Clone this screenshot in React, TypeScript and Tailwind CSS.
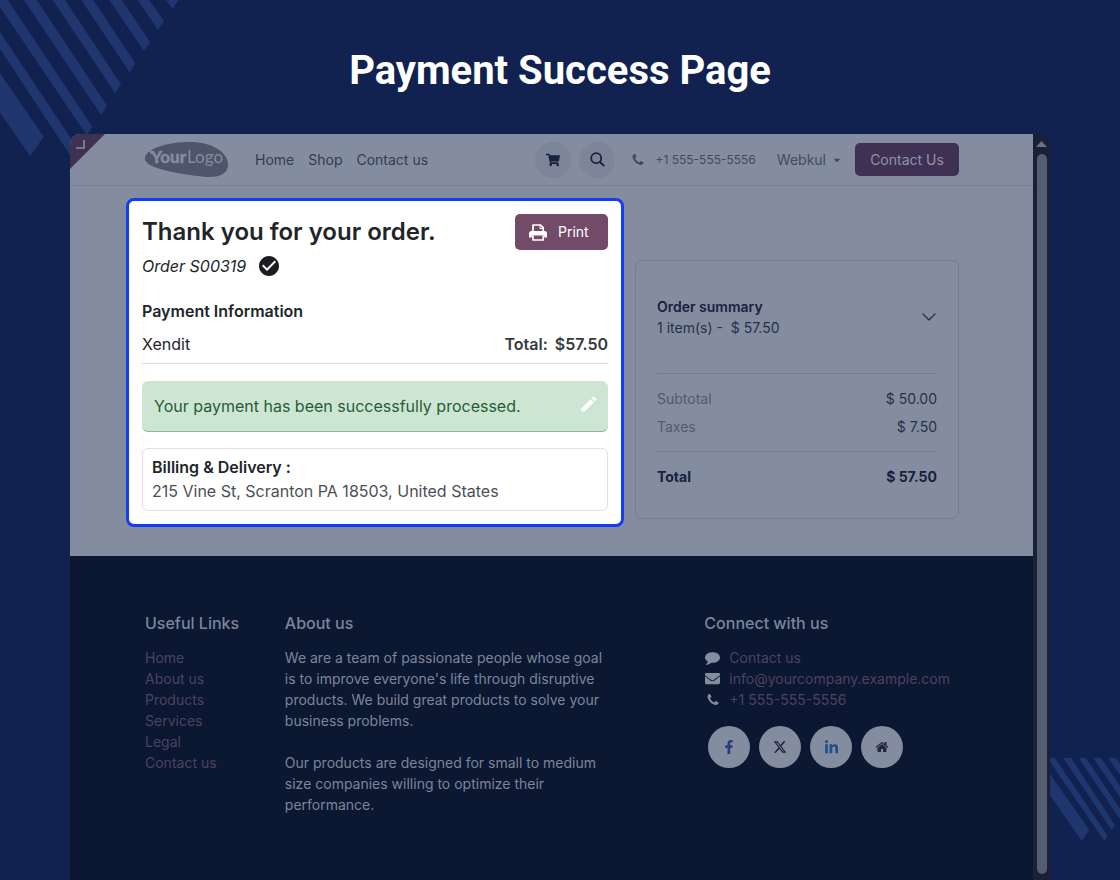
import type { ReactNode } from "react";
import { FaShoppingCart, FaEnvelope, FaFacebookF, FaLinkedinIn, FaCaretDown } from "react-icons/fa";
import { FaXTwitter } from "react-icons/fa6";
import { BsChevronDown } from "react-icons/bs";
import { MdEdit, MdCheckCircle } from "react-icons/md";

function TopStripes() {
  return (
    <svg className="absolute left-0 top-0" width="180" height="158" viewBox="0 0 180 158" fill="#20366f" aria-hidden="true">
      <path d="M166 0H178.3L172.7 9Z" />
      <path d="M137.7 0H149.3L164 21L158 30Z" />
      <path d="M109.3 0H121.7L150 42L144 51Z" />
      <path d="M81.3 0H93.3L135.3 63.3L129.7 72.3Z" />
      <path d="M52.7 0H65L121 84.3L115.3 93.3Z" />
      <path d="M24 0H36.7L107 105.7L101 114.7Z" />
      <path d="M0 0H7.7L92.3 126.7L86.7 135.3L0 7Z" />
      <path d="M0 32L78 149L72 158L0 49Z" />
      <path d="M0 73.3L43.7 136.7L30.3 156.3L0 112.7Z" />
    </svg>
  );
}

function BottomStripes() {
  return (
    <svg className="absolute bottom-[38px] right-0" width="70" height="84" viewBox="0 0 70 84" fill="#20366f" aria-hidden="true">
      <path d="M0 16L39.3 72L31.7 82.7L0 37Z" />
      <path d="M0 0H5L57.7 78L54.3 82.7L0 4Z" />
      <path d="M13.3 0H21L65 67.3L61.7 72Z" />
      <path d="M28.7 0H36L70 51V61.3Z" />
      <path d="M43.3 0H51L70 28V39Z" />
      <path d="M58.3 0H66L70 6V17Z" />
    </svg>
  );
}

function Logo() {
  return (
    <svg width="84" height="36" viewBox="1 1 84 36" role="img" aria-label="Your Logo">
      <path d="M1 16C4 7 24 1 46 1C68 1 84 11 84 24C84 32 76 36.500 64 36C42 34 -3 28 1 16Z" fill="#4d566a" />
      <path d="M5 10L9 10L11 14L7 13Z" fill="#848c9f" />
      <text x="7" y="22" fontFamily="Lato, sans-serif" fontWeight="900" fontSize="17" fill="#848c9f" stroke="#848c9f" strokeWidth="0.4">Your</text>
      <text x="43" y="22" fontFamily="Lato, sans-serif" fontWeight="400" fontSize="17" fill="#848c9f">Logo</text>
    </svg>
  );
}

function SearchIcon() {
  return (
    <svg width="15" height="15" viewBox="0 0 15 15" fill="none" stroke="#18213d" strokeWidth="1.8" strokeLinecap="round" aria-hidden="true">
      <circle cx="6.200" cy="6.200" r="5" />
      <path d="M10 10L13.700 13.700" />
    </svg>
  );
}

function PhoneIcon() {
  return (
    <svg width="14" height="14" viewBox="0 0 1792 1792" fill="currentColor" aria-hidden="true">
      <path d="M1600 1240q0 27-10 70.500t-21 68.500q-21 50-122 106-94 51-186 51-27 0-53-3.500t-57.500-12.500-47-14.500-55.500-20.500-49-18q-98-35-175-83-127-79-264-216t-216-264q-48-77-83-175-3-9-18-49t-20.500-55.500-14.500-47-12.500-57.500-3.500-53q0-92 51-186 56-101 106-122 25-11 68.500-21t70.500-10q14 0 21 3 18 6 53 76 11 19 30 54t35 63.500 31 53.500q3 4 17.500 25t21.500 35.500 7 28.500q0 20-28.500 50t-62 55-62 53-28.500 46q0 9 5 22.500t8.500 20.500 14 24 11.500 19q76 137 174 235t235 174q2 1 19 11.500t24 14 20.500 8.500 22.500 5q18 0 46-28.500t53-62 55-62 50-28.500q14 0 28.500 7t35.500 21.500 25 17.500q25 15 53.500 31t63.500 35 54 30q70 35 76 53 3 7 3 21z" />
    </svg>
  );
}

function HomeIcon() {
  return (
    <svg width="14" height="14" viewBox="0 0 1792 1792" fill="currentColor" aria-hidden="true">
      <path d="M1472 992v480q0 26-19 45t-45 19h-384v-384h-256v384h-384q-26 0-45-19t-19-45v-480q0-1 .5-3t.5-3l575-474 575 474q1 2 1 6zm223-69l-62 74q-8 9-21 11h-3q-13 0-21-7l-692-577-692 577q-12 8-24 7-13-2-21-11l-62-74q-8-10-7-23.500t11-21.500l719-599q32-26 76-26t76 26l244 204v-195q0-14 9-23t23-9h192q14 0 23 9t9 23v408l219 182q10 8 11 21.500t-7 23.500z" />
    </svg>
  );
}

function CommentIcon() {
  return (
    <svg width="15" height="15" viewBox="0 0 1792 1792" fill="currentColor" aria-hidden="true">
      <path d="M1792 896q0 174-120 321.500t-326 233-450 85.500q-70 0-145-8-198 175-460 242-49 14-114 22-17 2-30.500-9t-17.500-29v-1q-3-4-.5-12t2-10 4.500-9.500l6-9 7-8.500 8-9q7-8 31-34.500t34.500-38 31-39.500 32.500-51 27-59 26-76q-157-89-247.500-220t-90.500-281q0-130 71-248.500t191-204.500 286-136.500 348-50.500 348 50.500 286 136.500 191 204.500 71 248.500z" />
    </svg>
  );
}

function PrintIcon() {
  return (
    <svg width="18" height="17" viewBox="0 0 18 17" aria-hidden="true">
      <path d="M4 8V1H11.500L14.200 3.700V8" fill="none" stroke="#fff" strokeWidth="1.700" strokeLinejoin="round" />
      <path d="M11 0.500V4.500H15" fill="none" stroke="#fff" strokeWidth="1" />
      <path d="M2.500 7H15.500Q18 7 18 9.500V13.500H15.200V11.500H2.800V13.500H0V9.500Q0 7 2.500 7Z" fill="#fff" />
      <path d="M4 11.500V16H14.200V11.500" fill="none" stroke="#fff" strokeWidth="1.700" strokeLinejoin="round" />
    </svg>
  );
}

function Header() {
  return (
    <header className="flex h-[52px] items-center border-b border-[#788095] pl-[75px] pr-[74px] text-sm text-[#343c54]">
      <a href="#" className="block shrink-0"><Logo /></a>
      <nav className="ml-[26px] flex gap-[14px]">
        <a href="#">Home</a>
        <a href="#">Shop</a>
        <a href="#">Contact us</a>
      </nav>
      <div className="ml-auto flex items-center">
        <button aria-label="Cart" className="flex size-9 items-center justify-center rounded-full bg-[#7d8599] text-[#18213d]"><FaShoppingCart size={14} /></button>
        <button aria-label="Search" className="ml-2 flex size-9 items-center justify-center rounded-full bg-[#7d8599]"><SearchIcon /></button>
        <a href="#" className="ml-4 flex items-center gap-[10px] text-xs text-[#434a60]"><PhoneIcon />+1 555-555-5556</a>
        <button className="ml-[21px] flex items-center gap-[6px] text-[#434a60]">Webkul <FaCaretDown size={10} /></button>
        <button className="ml-[13px] h-[33px] w-[104px] rounded-[5px] bg-[#3e3153] text-[#8f94a8]">Contact Us</button>
      </div>
    </header>
  );
}

function OrderCard() {
  return (
    <section className="rounded-lg border-[3px] border-[#143cf5] bg-white px-[13px] pb-[13px] pt-[13px] text-base text-[#212529]">
      <div className="flex items-start justify-between">
        <h2 className="text-2xl leading-9 font-semibold">Thank you for your order.</h2>
        <button className="flex h-9 w-[93px] items-center gap-[11px] rounded-[5px] bg-[#714b67] pl-[14px] text-sm text-white"><PrintIcon />Print</button>
      </div>
      <p className="mt-1 flex h-6 items-center gap-[11px] italic">Order S00319 <MdCheckCircle size={24} color="#1c1b1f" /></p>
      <h3 className="mt-[21px] leading-6 font-semibold">Payment Information</h3>
      <div className="mt-[9px] flex justify-between border-b border-[#dcdcdc] pb-[7px] leading-6">
        <span>Xendit</span>
        <span className="flex gap-[7px] font-semibold text-[#343a40]"><span>Total:</span><span>$57.50</span></span>
      </div>
      <div className="mt-[17px] flex h-[51px] items-center justify-between rounded-md border-b border-[#8bb697] bg-[#cde6d4] px-3 text-[#285c36]">
        <span>Your payment has been successfully processed.</span>
        <button aria-label="Edit" className="mb-1 -mr-[3px]"><MdEdit size={20} color="#fff" /></button>
      </div>
      <div className="mt-4 rounded-md border border-[#dee0e2] px-[9px] py-[6px]">
        <h3 className="leading-6 font-semibold">Billing &amp; Delivery :</h3>
        <p className="leading-[25px] text-[#4c5054]">215 Vine St, Scranton PA 18503, United States</p>
      </div>
    </section>
  );
}

function OrderSummary() {
  return (
    <section className="mt-[62px] self-start rounded-md border border-[#757d92] px-[21px] pb-[30px] pt-[35px] text-sm text-[#283049]">
      <div className="flex items-center justify-between pb-[35px]">
        <div className="leading-[21px]">
          <h3 className="font-semibold text-[#18213d]">Order summary</h3>
          <p className="whitespace-pre">1 item(s) -  $ 57.50</p>
        </div>
        <button aria-label="Toggle summary"><BsChevronDown size={16} strokeWidth={0.5} /></button>
      </div>
      <table className="w-full border-t border-[#737b90]">
        <tbody>
          <tr className="h-[39px]"><th scope="row" className="pt-[11px] text-left font-normal text-[#535a70]">Subtotal</th><td className="pt-[11px] text-right">$ 50.00</td></tr>
          <tr className="h-[39px]"><th scope="row" className="pb-[10px] text-left font-normal text-[#535a70]">Taxes</th><td className="pb-[10px] text-right">$ 7.50</td></tr>
          <tr className="h-[36px] border-t border-[#737b90] font-bold text-[#18213d]"><th scope="row" className="pt-[14px] text-left">Total</th><td className="pt-[14px] text-right">$ 57.50</td></tr>
        </tbody>
      </table>
    </section>
  );
}

function ContactRow({ icon, children }: { icon: ReactNode; children: ReactNode }) {
  return (
    <li className="flex items-center gap-2">
      <span className="flex w-[17px] justify-center text-[#848c9f]">{icon}</span>
      <a href="#">{children}</a>
    </li>
  );
}

function Social({ label, color, children }: { label: string; color: string; children: ReactNode }) {
  return (
    <a href="#" aria-label={label} style={{ color }} className="flex size-[42px] items-center justify-center rounded-full bg-[#848c9f]">
      {children}
    </a>
  );
}

function Footer() {
  return (
    <footer className="grid flex-1 grid-cols-[140fr_420fr_329fr] items-start bg-[#0c1732] pl-[75px] pt-[55px] text-sm leading-[21px] text-[#7d8599]">
      <div>
        <h4 className="mb-3 text-base leading-6 font-medium">Useful Links</h4>
        <ul className="text-[#4b4361]">
          {["Home", "About us", "Products", "Services", "Legal", "Contact us"].map((t) => (
            <li key={t}><a href="#">{t}</a></li>
          ))}
        </ul>
      </div>
      <div>
        <h4 className="mb-3 text-base leading-6 font-medium">About us</h4>
        <p className="mb-[21px] max-w-[330px]">We are a team of passionate people whose goal is to improve everyone's life through disruptive products. We build great products to solve your business problems.</p>
        <p className="max-w-[330px]">Our products are designed for small to medium size companies willing to optimize their performance.</p>
      </div>
      <div>
        <h4 className="mb-3 text-base leading-6 font-medium">Connect with us</h4>
        <ul className="text-[#4b4361]">
          <ContactRow icon={<CommentIcon />}>Contact us</ContactRow>
          <ContactRow icon={<FaEnvelope size={15} />}>info@yourcompany.example.com</ContactRow>
          <ContactRow icon={<PhoneIcon />}>+1 555-555-5556</ContactRow>
        </ul>
        <div className="ml-1 mt-4 flex gap-[9px]">
          <Social label="Facebook" color="#264079"><FaFacebookF size={14} /></Social>
          <Social label="X" color="#18213d"><FaXTwitter size={14} /></Social>
          <Social label="LinkedIn" color="#1e5088"><FaLinkedinIn size={15} /></Social>
          <Social label="Website" color="#202844"><HomeIcon /></Social>
        </div>
      </div>
    </footer>
  );
}

function Scrollbar() {
  return (
    <div className="flex w-[17px] shrink-0 flex-col items-center bg-[#192038] pb-[6px] pt-[7px]" aria-hidden="true">
      <svg width="11" height="6" viewBox="0 0 11 6" fill="#6b7285"><path d="M5.500 0L11 6H0Z" /></svg>
      <div className="mt-[7px] w-[10px] flex-1 rounded-full bg-[#555d70]" />
    </div>
  );
}

export default function App() {
  return (
    <div className="relative flex min-h-screen flex-col overflow-hidden bg-[#112150] font-['Inter',sans-serif]">
      <TopStripes />
      <BottomStripes />
      <h1 className="relative pb-[39px] pt-[47px] text-center font-['Roboto',sans-serif] text-[40px] leading-[48px] font-bold text-white">Payment Success Page</h1>
      <div className="relative mx-[70px] flex flex-1 overflow-hidden rounded-t-[10px]">
        <div className="relative flex min-w-0 flex-1 flex-col bg-[#848c9f]">
          <div className="absolute left-0 top-0">
            <svg width="35" height="35" viewBox="0 0 35 35" aria-hidden="true">
              <path d="M0 0H35L0 35Z" fill="#3e3153" />
              <path d="M6 14H14V6" fill="none" stroke="#848c9f" strokeWidth="1.600" />
            </svg>
          </div>
          <Header />
          <main className="grid grid-cols-[498fr_324fr] gap-[11px] pb-[29px] pl-14 pr-[74px] pt-3">
            <OrderCard />
            <OrderSummary />
          </main>
          <Footer />
        </div>
        <Scrollbar />
      </div>
    </div>
  );
}
